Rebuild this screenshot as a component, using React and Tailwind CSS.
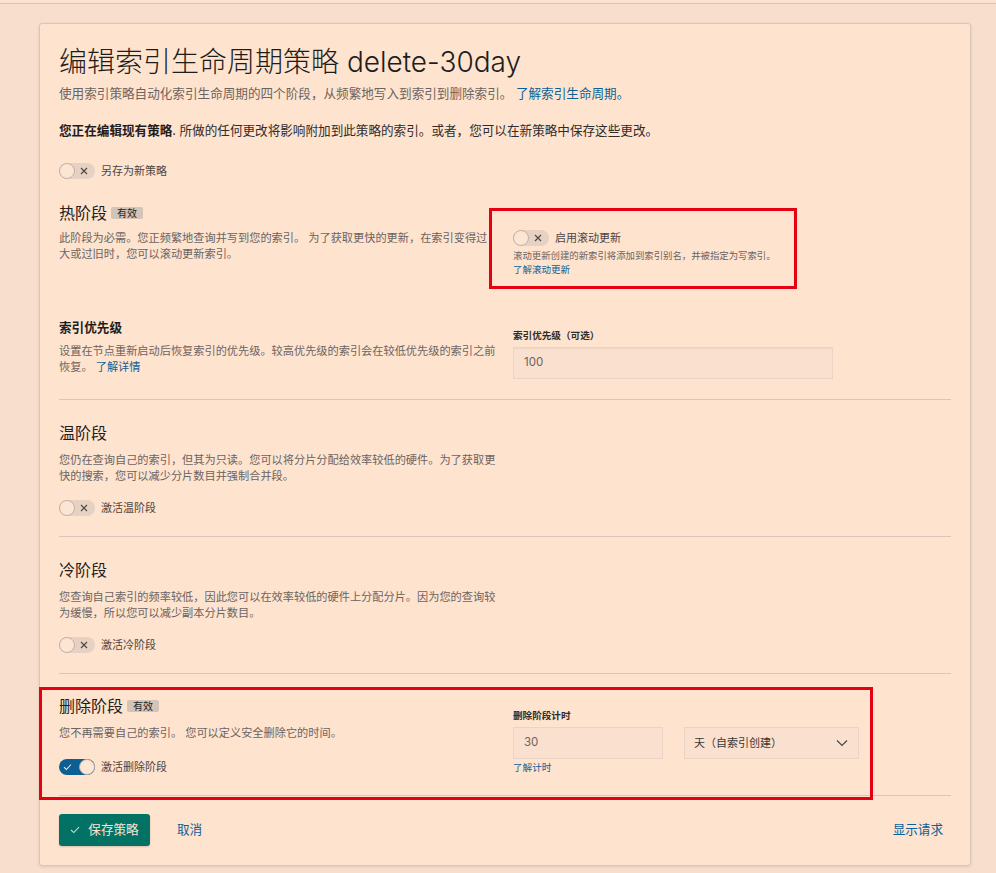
import React from "react";

const Toggle = ({ on }) => {
  return (
    <span
      className={
        on
          ? "relative inline-flex h-4 w-9 shrink-0 rounded-full bg-[#0c5f95]"
          : "relative inline-flex h-4 w-9 shrink-0 rounded-full bg-[#e6d1c3]"
      }
    >
      {on ? (
        <>
          <svg className="absolute left-[4px] top-[4px]" width="9" height="8" viewBox="0 0 9 8">
            <path d="M1 4.2 L3.4 6.5 L8 1.5" fill="none" stroke="#fde3cf" strokeWidth="1.1" />
          </svg>
          <span className="absolute right-0 top-0 h-4 w-4 rounded-full border border-[#b9a89c] bg-[#fde6d4]" />
        </>
      ) : (
        <>
          <span className="absolute left-0 top-0 h-4 w-4 rounded-full border border-[#c3b1a5] bg-[#fde5d3]" />
          <svg className="absolute right-[7px] top-[4px]" width="8" height="8" viewBox="0 0 8 8">
            <path d="M1 1 L7 7 M7 1 L1 7" fill="none" stroke="#4a4644" strokeWidth="1.1" />
          </svg>
        </>
      )}
    </span>
  );
};

const Badge = () => (
  <span className="inline-flex h-[12px] items-center rounded-[2px] bg-[#d4c3b7] px-[6px] text-[10px] leading-[12px] text-[#1f1d1c]">
    有效
  </span>
);

const PhaseHeading = ({ title, badge }) => (
  <div className="flex items-center gap-[4px]">
    <h2 className="text-[16px] leading-[24px] text-[#1f1d1c]">{title}</h2>
    {badge && <Badge />}
  </div>
);

const Desc = ({ children, className = "" }) => (
  <p className={`text-[11.2px] leading-[16px] text-[#6b6461] ${className}`}>{children}</p>
);

const ToggleRow = ({ on, label, className = "" }) => (
  <div className={`flex h-4 items-center gap-[6px] ${className}`}>
    <Toggle on={on} />
    <span className="text-[11px] leading-[16px] text-[#4b4644]">{label}</span>
  </div>
);

const Divider = ({ className = "" }) => <div className={`border-t border-[#d9c6b8] ${className}`} />;

export default function App() {
  return (
    <div className="min-h-screen bg-[#f8dfcd] font-[Inter,'Noto_Sans_CJK_SC',sans-serif]">
      <div className="h-[4px] border-b border-[#d7c5b8] bg-[#fbe3d2]" />
      <div className="ml-[39px] mt-[19px] w-[932px] rounded-[3px] border border-[#d8c6b9] bg-[#fee3cf] px-[19px] pb-[19px] pt-[20px] shadow-[0_1px_3px_rgba(120,90,70,0.18)]">
        {/* header */}
        <h1 className="text-[28px] font-light leading-[36px] text-[#1f1d1c]">编辑索引生命周期策略 delete-30day</h1>
        <p className="mt-[4px] text-[12.6px] leading-[20px] text-[#6b6461]">
          使用索引策略自动化索引生命周期的四个阶段，从频繁地写入到索引到删除索引。{" "}
          <span className="text-[#0d5f98]">了解索引生命周期。</span>
        </p>
        <p className="mt-[17px] text-[12.6px] leading-[20px] text-[#2f2c2b]">
          <span className="font-bold text-[#1f1d1c]">您正在编辑现有策略</span>. 所做的任何更改将影响附加到此策略的索引。或者，您可以在新策略中保存这些更改。
        </p>
        <ToggleRow label="另存为新策略" className="mt-[22px]" />

        {/* hot phase */}
        <div className="mt-[22px] grid grid-cols-[438px_1fr] gap-x-4">
          <div>
            <PhaseHeading title="热阶段" badge />
            <Desc className="mt-[5px]">
              此阶段为必需。您正频繁地查询并写到您的索引。 为了获取更快的更新，在索引变得过大或过旧时，您可以滚动更新索引。
            </Desc>
          </div>
          <div>
            <div className="-ml-[24px] mt-[7px] w-[308px] border-[3px] border-[#e50012] pb-[9px] pl-[21px] pt-[19px]">
              <ToggleRow label="启用滚动更新" />
              <p className="mt-[3px] text-[9.4px] leading-[14px] text-[#6b6461]">
                滚动更新创建的新索引将添加到索引别名，并被指定为写索引。
              </p>
              <p className="text-[9.5px] leading-[14px] text-[#0d5f98]">了解滚动更新</p>
            </div>
          </div>
        </div>

        {/* index priority */}
        <div className="mt-[29px] grid grid-cols-[438px_1fr] gap-x-4">
          <div>
            <h3 className="text-[12.6px] font-bold leading-[20px] text-[#1f1d1c]">索引优先级</h3>
            <Desc className="mt-[5px]">
              设置在节点重新启动后恢复索引的优先级。较高优先级的索引会在较低优先级的索引之前恢复。{" "}
              <span className="text-[#0d5f98]">了解详情</span>
            </Desc>
          </div>
          <div className="pt-[11px]">
            <label className="block text-[9.6px] font-bold leading-[14px] text-[#2f2c2b]">索引优先级（可选）</label>
            <div className="mt-[4px] flex h-[32px] w-[320px] items-center border border-[#ead4c5] bg-[#f9e0cf] px-[10px] text-[11.5px] text-[#6b6461] shadow-[inset_0_1px_1px_rgba(120,90,70,0.06)]">
              100
            </div>
          </div>
        </div>

        <Divider className="mt-5" />

        {/* warm phase */}
        <div className="mt-[21px] w-[438px]">
          <PhaseHeading title="温阶段" />
          <Desc className="mt-[7px]">
            您仍在查询自己的索引，但其为只读。您可以将分片分配给效率较低的硬件。为了获取更快的搜索，您可以减少分片数目并强制合并段。
          </Desc>
          <ToggleRow label="激活温阶段" className="mt-4" />
        </div>

        <Divider className="mt-5" />

        {/* cold phase */}
        <div className="mt-[21px] w-[438px]">
          <PhaseHeading title="冷阶段" />
          <Desc className="mt-[7px]">
            您查询自己索引的频率较低，因此您可以在效率较低的硬件上分配分片。因为您的查询较为缓慢，所以您可以减少副本分片数目。
          </Desc>
          <ToggleRow label="激活冷阶段" className="mt-4" />
        </div>

        <Divider className="mt-5" />

        {/* delete phase */}
        <div className="relative mt-[20px]">
          <div className="pointer-events-none absolute -left-5 -top-[7px] h-[113px] w-[834px] border-[3px] border-[#e50012]" />
          <div className="grid grid-cols-[438px_1fr] gap-x-4">
            <div>
              <PhaseHeading title="删除阶段" badge />
              <Desc className="mt-[7px]">您不再需要自己的索引。 您可以定义安全删除它的时间。</Desc>
              <ToggleRow on label="激活删除阶段" className="mt-[18px]" />
            </div>
            <div className="pt-[15px]">
              <label className="block text-[9.6px] font-bold leading-[14px] text-[#2f2c2b]">删除阶段计时</label>
              <div className="mt-[4px] flex gap-[21px]">
                <div className="flex h-[32px] w-[150px] items-center border border-[#ead4c5] bg-[#f9e0cf] px-[10px] text-[11.5px] text-[#6b6461]">
                  30
                </div>
                <div className="flex h-[32px] w-[175px] items-center justify-between border border-[#ead4c5] bg-[#f9e0cf] pl-[9px] pr-[10px] text-[11px] text-[#3b3735]">
                  <span>天（自索引创建）</span>
                  <svg width="12" height="8" viewBox="0 0 12 8">
                    <path d="M1 1.5 L6 6.5 L11 1.5" fill="none" stroke="#4a4644" strokeWidth="1.2" />
                  </svg>
                </div>
              </div>
              <p className="mt-[2px] text-[9.6px] leading-[14px] text-[#0d5f98]">了解计时</p>
            </div>
          </div>
          <Divider className="mt-5" />
        </div>

        {/* footer */}
        <div className="mt-[18px] flex items-center">
          <button className="flex h-[32px] w-[91px] items-center justify-center gap-[8px] rounded-[3px] bg-[#037264] text-[12.6px] text-[#fde3cf] shadow-[0_1px_2px_rgba(0,0,0,0.15)]">
            <svg width="10" height="8" viewBox="0 0 10 8">
              <path d="M1 4 L3.8 6.6 L9 1.2" fill="none" stroke="#cfd8cc" strokeWidth="1.1" />
            </svg>
            保存策略
          </button>
          <span className="ml-[27px] text-[12.6px] text-[#0d5f98]">取消</span>
          <span className="ml-auto mr-[8px] text-[12.6px] text-[#0d5f98]">显示请求</span>
        </div>
      </div>
    </div>
  );
}
